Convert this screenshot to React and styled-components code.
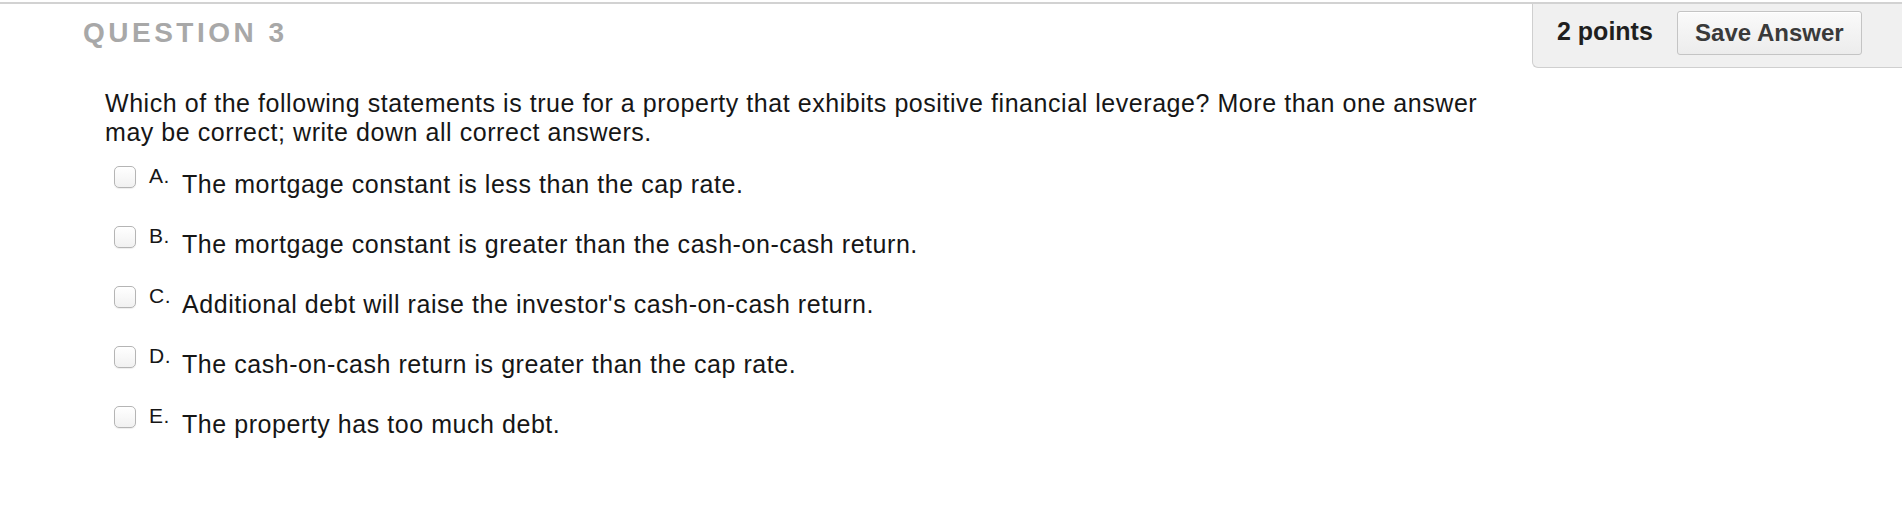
import React from 'react'
import styled, { createGlobalStyle } from 'styled-components'

const GlobalStyle = createGlobalStyle`
  html, body {
    margin: 0;
    padding: 0;
    background: #fff;
  }
  body {
    font-family: "Liberation Sans", Arial, Helvetica, sans-serif;
    color: #1a1a1a;
  }
`

const Page = styled.div`
  margin-top: 2px;
  border-top: 2px solid #d2d2d2;
`

const Header = styled.header`
  display: flex;
  justify-content: space-between;
  align-items: flex-start;
`

const Title = styled.h2`
  margin: 13px 0 0 83px;
  font-size: 28px;
  line-height: 32px;
  font-weight: bold;
  letter-spacing: 3.5px;
  color: #a8a8a8;
`

const PointsBox = styled.div`
  display: flex;
  align-items: flex-start;
  gap: 24px;
  width: 370px;
  height: 64px;
  padding-left: 24px;
  background: #f0f0f0;
  border-left: 1px solid #cfcfcf;
  border-bottom: 1px solid #cfcfcf;
  border-bottom-left-radius: 6px;
  box-sizing: border-box;
`

const Points = styled.span`
  margin-top: 13px;
  font-size: 25px;
  line-height: 28px;
  font-weight: bold;
  color: #1f1f1f;
`

const SaveButton = styled.button`
  margin-top: 7px;
  width: 185px;
  height: 44px;
  padding: 0;
  font-family: inherit;
  font-size: 24px;
  font-weight: bold;
  color: #3a3a3a;
  background: linear-gradient(#fafafa, #ececec);
  border: 1px solid #c4c4c4;
  border-radius: 3px;
  box-shadow: inset 0 1px 0 #fff;
  cursor: pointer;
`

const Body = styled.section`
  padding: 21px 0 0 105px;
`

const QuestionText = styled.p`
  margin: 0;
  width: 1400px;
  font-size: 25px;
  line-height: 29px;
  letter-spacing: 0.55px;
  color: #161616;
`

const Options = styled.ul`
  list-style: none;
  margin: 18px 0 0 9px;
  padding: 0;
  display: flex;
  flex-direction: column;
  gap: 26px;
`

const Option = styled.li`
  display: flex;
  align-items: flex-start;
`

const Box = styled.span`
  flex: none;
  width: 22px;
  height: 22px;
  margin-top: 1px;
  box-sizing: border-box;
  border: 1px solid #b5b5b5;
  border-radius: 5px;
  background: linear-gradient(#ffffff, #f1f1f1);
  box-shadow: 0 1px 1px rgba(0, 0, 0, 0.07);
`

const Letter = styled.span`
  width: 33px;
  margin-left: 13px;
  font-size: 21px;
  line-height: 21px;
  letter-spacing: 0.5px;
  color: #161616;
`

const Answer = styled.span`
  margin-top: 5px;
  font-size: 25px;
  line-height: 29px;
  letter-spacing: 0.55px;
  color: #161616;
`

const answers = [
  { letter: 'A', text: 'The mortgage constant is less than the cap rate.' },
  { letter: 'B', text: 'The mortgage constant is greater than the cash-on-cash return.' },
  { letter: 'C', text: "Additional debt will raise the investor's cash-on-cash return." },
  { letter: 'D', text: 'The cash-on-cash return is greater than the cap rate.' },
  { letter: 'E', text: 'The property has too much debt.' },
]

const App = () => (
  <Page>
    <GlobalStyle />
    <Header>
      <Title>QUESTION 3</Title>
      <PointsBox>
        <Points>2 points</Points>
        <SaveButton>Save Answer</SaveButton>
      </PointsBox>
    </Header>
    <Body>
      <QuestionText>
        Which of the following statements is true for a property that exhibits positive financial leverage? More than one answer may be correct; write down all correct answers.
      </QuestionText>
      <Options>
        {answers.map(a => (
          <Option key={a.letter}>
            <Box />
            <Letter>{a.letter}.</Letter>
            <Answer>{a.text}</Answer>
          </Option>
        ))}
      </Options>
    </Body>
  </Page>
)

export default App
